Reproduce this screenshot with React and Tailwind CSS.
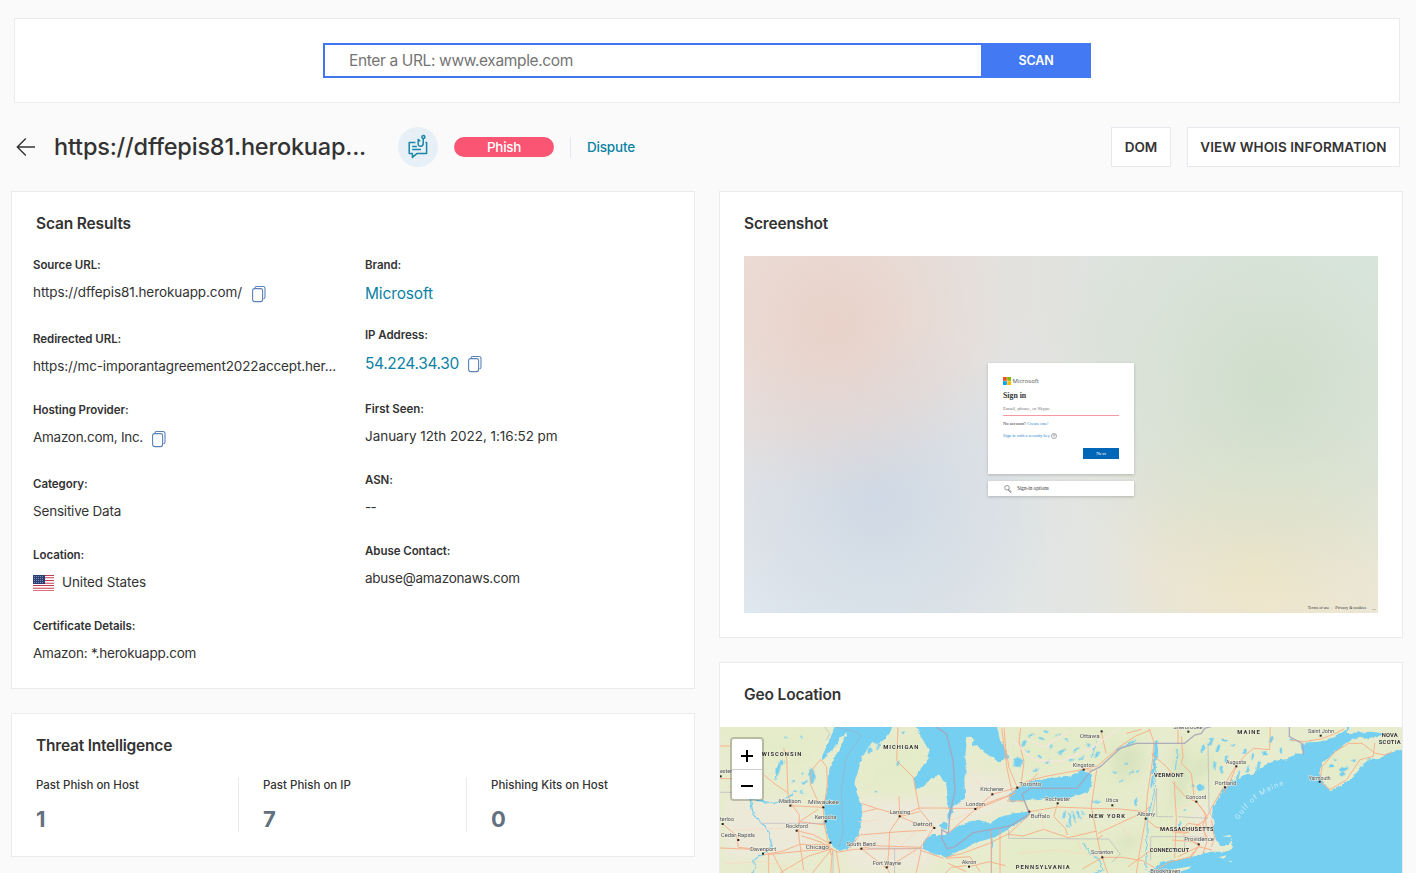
import React from "react";

function CopyIcon() {
  return (
    <svg width="16" height="18" viewBox="0 0 16 18" fill="none" stroke="#5b83b8" strokeWidth="1.1">
      <rect x="1.6" y="3.6" width="10" height="13" rx="2" />
      <path d="M4 3.2C4 2 4.6 1.5 5.6 1.5H12c1.2 0 2 .8 2 2V12c0 1-.6 1.8-1.6 1.8" />
    </svg>
  );
}

function Flag() {
  return (
    <svg width="21" height="16" viewBox="0 0 21 16" shapeRendering="crispEdges">
      <rect width="21" height="16" fill="#fff" />
      <path d="M0 .5h21M0 5.5h21M0 10.5h21" stroke="#c23b50" />
      <path d="M0 2.5h21M0 8h21M0 13h21M0 15.5h21" stroke="#d9707f" />
      <path d="M0 3.5h21M0 7h21M0 12h21" stroke="#f3ccd1" />
      <rect width="12" height="9" fill="#2b3e74" />
      <path d="M1 1.5h10M1 3.5h10M1 5.5h10M1 7.5h10" stroke="#8592b5" strokeDasharray="1 1" />
    </svg>
  );
}

function PhishIcon() {
  return (
    <svg width="22" height="26" viewBox="0 0 22 26" fill="none" stroke="#1b87a9" strokeWidth="1.5" strokeLinejoin="round">
      <path d="M8.4 8.6H2.2v11h3.2v3.8l4.4-3.8h9.8v-11h-1.2" />
      <path d="M5.2 12.4h4.6M5.2 15.6h8.8" />
      <path d="M16.2 4.6v5c0 3.6-5 3.6-5 .4V5.4l2 1.8" />
      <circle cx="16.4" cy="2.9" r="1.5" />
    </svg>
  );
}

function Field({ label, children, className }) {
  return (
    <div className={className}>
      <div className="h-4 text-[11.5px] leading-4 font-semibold tracking-[-0.06px]">{label}</div>
      <div className="mt-[7px] flex h-[25px] items-center text-[13.5px] whitespace-nowrap">{children}</div>
    </div>
  );
}

function Stat({ label, value, className }) {
  return (
    <div className={className}>
      <div className="h-4 text-[11.5px] leading-4 font-medium">{label}</div>
      <div className="mt-[10px] text-[22px] leading-[33px] font-bold text-[#637080]">{value}</div>
    </div>
  );
}

function CardTitle({ children, className }) {
  return <h2 className={`mt-5 text-[15.5px] leading-6 font-semibold ${className}`}>{children}</h2>;
}

function SitePreview() {
  return (
    <div className="flex h-[357px] w-[634px] flex-col items-center bg-[radial-gradient(circle_at_14%_19%,#e9d2c9_0%,#e9d2c900_28%),radial-gradient(circle_at_21%_68%,#cfd9e5_0%,#cfd9e500_32%),radial-gradient(circle_at_83%_36%,#d0decc_0%,#d0decc00_38%),radial-gradient(circle_at_81%_87%,#efe5c8_0%,#efe5c800_28%),radial-gradient(circle_at_0%_0%,#ecdfdb_0%,#ecdfdb00_50%),radial-gradient(circle_at_0%_100%,#dfe8f0_0%,#dfe8f000_60%),radial-gradient(circle_at_100%_0%,#dae7df_0%,#dae7df00_50%),radial-gradient(circle_at_100%_100%,#eae7d9_0%,#eae7d900_60%)] bg-[#e0e2df] pt-[107px] font-['Liberation_Serif',serif] text-[#333]">
      <div className="flex h-[111px] w-[146px] flex-col bg-white px-[15px] pt-[14px] text-[4.6px] leading-[6px] shadow-[0_1px_3px_rgba(0,0,0,0.2)]">
        <div className="flex h-2 items-center gap-[1.5px]">
          <svg width="8" height="8" viewBox="0 0 8 8">
            <path fill="#f25022" d="M0 0h3.8v3.8H0z" />
            <path fill="#7fba00" d="M4.2 0H8v3.8H4.2z" />
            <path fill="#00a4ef" d="M0 4.2h3.8V8H0z" />
            <path fill="#ffb900" d="M4.2 4.2H8V8H4.2z" />
          </svg>
          <span className="font-['Open_Sans',sans-serif] text-[6px] leading-[7px] text-[#555]">Microsoft</span>
        </div>
        <div className="mt-[6px] text-[7.8px] leading-[9px] font-bold">Sign in</div>
        <div className="mt-[6px] h-[9px] text-[5px] text-[#777]">Email, phone, or Skype</div>
        <div className="h-px w-full bg-[#f39aa2]" />
        <div className="mt-[5px]">No account? <span className="text-[#2a84c9]">Create one!</span></div>
        <div className="mt-[6px] flex h-[6px] items-center gap-px text-[4.4px] whitespace-nowrap text-[#2a84c9]">
          Sign in with a security key
          <svg width="6" height="6" viewBox="0 0 6 6" fill="none" stroke="#555" strokeWidth=".5"><circle cx="3" cy="3" r="2.5" /><path d="M2.2 2.4c0-1.2 1.7-1 1.6 0L3 3.3v.4" /></svg>
        </div>
        <div className="mt-[9px] flex h-[11px] w-9 items-center justify-center self-end bg-[#0067b8] text-[5px] text-white">Next</div>
      </div>
      <div className="mt-[7px] flex h-[15px] w-[146px] items-center gap-[5px] bg-white pl-[16px] text-[5.2px] shadow-[0_1px_3px_rgba(0,0,0,0.2)]">
        <svg width="8" height="8" viewBox="0 0 8 8" fill="none" stroke="#555" strokeWidth=".6"><circle cx="3" cy="2.8" r="2.3" /><path d="M4.6 4.4l2.6 2.2-.4 1-2.8-2.4" /></svg>
        Sign-in options
      </div>
      <div className="mt-auto mr-[2px] flex h-[9px] items-center gap-[6px] self-end text-[4.2px]">
        <span>Terms of use</span><span>Privacy &amp; cookies</span><span className="text-[5px] leading-[5px]">...</span>
      </div>
    </div>
  );
}

/* City labels: name, x, y, width, dot x, dot y */
const cities = [
  ["Madison", 183, 249, 66, 217, 257], ["Milwaukee", 270, 252, 93, 316, 262],
  ["Kenosha", 290, 296, 65, 323, 304], ["Rockford", 203, 325, 67, 236, 332],
  ["Cedar Rapids", 9, 352, 102, 61, 360], ["Davenport", 97, 394, 77, 135, 401],
  ["Chicago", 263, 388, 70, 337, 368], ["South Bend", 386, 379, 87, 430, 386],
  ["Fort Wayne", 464, 434, 85, 506, 442], ["Lansing", 515, 281, 62, 545, 289],
  ["Detroit", 585, 319, 58, 649, 324], ["terloo", 6, 304, 42, 14, 312], ["ester", 6, 160, 36, 8, 169],
  ["Ottawa", 1085, 53, 60, 1151, 34], ["Kingston", 1064, 140, 66, 1097, 149],
  ["Kitchener", 787, 214, 71, 823, 223], ["Toronto", 904, 197, 66, 898, 203],
  ["London", 744, 257, 57, 772, 267], ["Rochester", 982, 242, 74, 1019, 250],
  ["Buffalo", 938, 293, 58, 934, 275], ["Utica", 1163, 247, 38, 1183, 256],
  ["Albany", 1257, 288, 54, 1283, 296], ["Scranton", 1119, 403, 67, 1153, 412],
  ["Akron", 731, 432, 44, 753, 440], ["Brookhaven", 1297, 460, 90, 1340, 470],
  ["Sherbrooke", 1366, 28, 88, 1411, 35], ["Augusta", 1524, 133, 60, 1555, 139],
  ["Portland", 1491, 194, 64, 1521, 202], ["Concord", 1403, 237, 62, 1435, 245],
  ["Providence", 1399, 364, 89, 1442, 373], ["Saint John", 1770, 39, 78, 1808, 47],
  ["Yarmouth", 1772, 179, 66, 1805, 185],
];
/* Region labels: name, x, y, width */
const regions = [
  ["WISCONSIN", 131, 108, 119], ["MICHIGAN", 496, 86, 105], ["NEW YORK", 1113, 293, 108],
  ["PENNSYLVANIA", 893, 446, 162], ["VERMONT", 1308, 171, 89], ["MASSACHUSETTS", 1326, 333, 161],
  ["CONNECTICUT", 1295, 396, 118], ["MAINE", 1558, 42, 67], ["NOVA", 1991, 51, 48], ["SCOTIA", 1982, 71, 66],
];
/* Inland lakes: x, y, rx, ry, rotation */
const ponds = [
  [180, 150, 5, 20, 15], [192, 128, 6, 9, 40], [282, 168, 8, 24, 0], [252, 160, 5, 3, 0], [260, 186, 10, 4, -30],
  [232, 212, 6, 4, 0], [225, 186, 5, 4, 0], [220, 242, 9, 4, 0], [250, 216, 5, 3, 20], [250, 50, 4, 3, 0], [202, 52, 5, 2, 0],
  [455, 90, 5, 12, 20], [480, 80, 4, 10, 15], [540, 130, 4, 8, 20], [474, 214, 4, 3, 0], [556, 38, 5, 4, 0],
  [899, 127, 15, 14, 0], [918, 70, 6, 10, 30], [940, 45, 10, 3, -20], [970, 55, 12, 3, 10], [1000, 80, 9, 3, -30],
  [1030, 95, 11, 4, -30], [965, 110, 8, 3, 20], [990, 125, 10, 3, -40], [1045, 60, 8, 3, 30], [955, 150, 9, 3, -30],
  [1075, 90, 12, 3, -40], [1090, 115, 10, 3, -30], [1110, 75, 8, 3, 40], [930, 95, 6, 3, 0], [985, 35, 7, 3, 20],
  [1020, 45, 9, 2, -10], [1060, 120, 8, 3, -10], [1135, 105, 12, 4, -50], [1205, 85, 14, 3, -30], [1235, 70, 22, 4, -28],
  [1313, 95, 7, 28, 0], [1307, 140, 4, 22, 10], [1302, 185, 3, 20, 10], [1254, 245, 3, 14, 25], [1240, 158, 8, 3, -30],
  [1210, 182, 8, 3, -30], [1225, 130, 6, 3, 0], [1260, 155, 6, 3, -30], [1136, 245, 12, 4, 5], [1190, 155, 7, 3, 0],
  [1039, 282, 3, 12, 30], [1055, 298, 3, 22, -8], [1068, 290, 3, 20, -20], [1082, 285, 3, 14, -30], [1095, 278, 2, 10, -35], [1050, 320, 2, 6, 0],
  [1446, 203, 10, 9, 30], [1425, 198, 4, 6, 0], [1455, 85, 4, 14, 30], [1478, 65, 5, 14, 30], [1500, 85, 5, 12, 20],
  [1520, 60, 7, 4, 0], [1545, 75, 8, 3, -40], [1490, 135, 4, 12, 10], [1510, 150, 4, 12, -15], [1525, 115, 4, 10, 20],
  [1580, 95, 5, 10, 20], [1605, 110, 4, 12, 10], [1640, 100, 9, 5, 30], [1660, 60, 5, 10, 30], [1690, 90, 5, 8, 0],
  [1620, 140, 4, 14, 15], [1590, 150, 4, 12, 10], [1560, 165, 4, 12, 20], [1720, 60, 6, 4, 0], [1540, 185, 4, 9, 20],
  [1877, 147, 14, 6, -20], [1873, 162, 8, 7, 0], [1840, 138, 7, 4, 0], [1908, 122, 5, 4, 0], [1850, 120, 5, 3, 0],
  [1400, 270, 4, 3, 0], [1385, 312, 4, 9, 20], [1465, 325, 5, 3, 0], [1371, 390, 4, 6, 0], [825, 372, 3, 12, 0],
];

function GeoMap() {
  return (
    <svg className="block" width="682" height="146" viewBox="6 21 2046 438" fontFamily="Roboto, sans-serif">
      <defs>
        <filter id="soft" x="0" y="0" width="100%" height="100%" colorInterpolationFilters="sRGB"><feGaussianBlur stdDeviation="18" /></filter>
        <filter id="rough" x="0" y="0" width="100%" height="100%" colorInterpolationFilters="sRGB">
          <feTurbulence type="fractalNoise" baseFrequency=".06" numOctaves="2" seed="4" />
          <feDisplacementMap in="SourceGraphic" scale="12" xChannelSelector="R" yChannelSelector="G" />
        </filter>
      </defs>
      <rect x="0" y="0" width="2060" height="470" fill="#e8ecce" />
      <g filter="url(#soft)">
        <path fill="#e4ebc8" d="M20 20h280l-30 120-180-20zM430 120l180-80 20 70-60 120-140-20zM880 20h420l-60 190-110 40 10-120-260 10zM1240 250h130v200h-60zM860 350l260-20 160 60-20 80H860zM1380 60h170l-50 130-120 40zM1800 120l120-70 40 60-120 90z" />
        <path fill="#ece9d9" d="M20 230l200 20 90 60-20 90-270 20zM390 240l260-10 30 80-50 140H380zM690 240l60-90 130 30 10 70-200 80zM1440 230l60 60v110l-80-10z" />
        <path fill="#d9e3bf" d="M1180 90l90-20 10 80-80 30zM1360 90l50-10-10 160-40 40zM1190 360l60-20 20 30-60 20zM1420 130l60-30-10 60-50 30z" />
      </g>
      <g fill="#75cff0" filter="url(#rough)">
        <path d="M355 5L335 60 318 95 308 120 318 118 330 100 345 88 365 55 388 36 372 75 350 110 330 160 328 205 318 260 322 310 330 350 345 380 365 393 390 385 412 365 425 330 433 290 430 250 415 215 412 180 425 140 435 105 446 90 462 66 480 72 500 58 515 40 530 5z" />
        <path d="M585 5L615 60 632 90 632 115 605 150 588 180 592 205 612 205 640 175 665 165 685 190 690 245 692 305 708 260 741 235 741 215 739 180 746 140 742 110 745 75 741 50 766 55 765 75 781 80 796 95 821 112 841 125 871 115 866 95 846 60 833 5z" />
        <path d="M876 245L871 225 896 205 931 185 991 175 1051 170 1091 150 1121 160 1123 195 1111 215 1081 225 1031 240 981 235 931 240 906 245z" />
        <path d="M616 365L640 345 680 345 711 325 751 305 781 300 816 310 846 290 891 280 931 275 929 292 881 322 831 352 771 368 741 386 711 398 686 413 650 402 616 387z" />
        <path d="M662 314L678 305 692 310 690 328 670 328z" />
        <path d="M2070 480L2070 85 2012 100 1982 118 1952 115 1927 140 1907 170 1872 195 1837 215 1817 190 1803 160 1812 130 1852 95 1892 65 1922 50 1952 55 2002 42 1962 35 1882 40 1892 32 1907 5 1880 32 1852 50 1802 65 1762 68 1747 75 1757 102 1732 100 1707 118 1682 120 1652 130 1632 140 1602 165 1577 165 1552 180 1527 195 1502 230 1484 260 1482 295 1492 300 1484 320 1490 350 1507 378 1535 378 1540 353 1545 382 1522 395 1482 395 1462 400 1422 410 1382 420 1330 428 1290 455 1320 480z" />
      </g>
      <path fill="#e9edcd" d="M1330 459l40-12 50-8-8 8-50 14zM1502 412l24-6-8 10zM1530 423l14-1-6 4zM1512 350l24-6 4 8-6-2z" />
      <g fill="#75cff0" filter="url(#rough)">
        {ponds.map(([x, y, rx, ry, r], i) => <ellipse key={i} cx={x} cy={y} rx={rx} ry={ry} transform={`rotate(${r} ${x} ${y})`} />)}
      </g>
      <g fill="none" stroke="#75cff0" strokeWidth="4" filter="url(#rough)">
        <path d="M92 215l8 40 6 30 28 25 20 30 8 40-30 25-25 15 5 22-10 20M98 238l70 12 34-12 20-14M170 180l14-50" />
        <path d="M1095 370l20 30 30 20 10 30-30 12M1140 60l-20 50M1316 60l-8 160-20 80-5 150M1378 90l-6 60M1500 280l-8 10" strokeWidth="3" />
      </g>
      <g fill="none" stroke="#f8ae86" strokeWidth="2.8">
        <path d="M6 78h30M197 85l9 30 4 110 12 30 22 30-2 60 15 105M138 165l30 25 41 28M130 170L50 176H6M216 257l100 5M240 308l60-40M308 118l-25 30-6 45 20 45 19 24 2 50 12 50 10 45M308 118l18 22 2 50-8 60M245 305l75 10M236 332l50 12 48 26M250 347l60 20 35 22M14 312l42 35 5 35 75 8M6 384l130 5 20 14 120-12 70-3M135 405l60-12 50-20 90 2M152 402v58M343 390l20 6 45-8 200-2M430 385l40-8 140 5M343 392l-5 68M355 395l10 64M395 385l30-40 120-10 80-4M545 290l60-15M545 290l-30 45-2 50-5 60M430 250l48 16-45 10M478 266l70 20 55-22h85M604 268l45 55M545 290l50 20 52 12M540 22l-4 100 50 50 18 95M606 385l40-60M610 388l-15 70M606 390l70 25M337 392l-55 68M337 388l-65 20-85 50M165 403l30 56M430 386l75 58 90-55M506 442l10 20M545 289l-2-60" />
        <path d="M686 265h86l60-25 60-20M898 203l-30 40h50l16 30M690 340l80-70 110-45M772 267l51-44 75-20 30-20 60-15 110-20 40-10 70-60 45-30 45-18M898 203l-25-60-10-60-5-60M882 215l-15-70-16-120M930 190l30-30M908 205l10-80-15-60 5-40M934 275l85-14 100 4 90 2 70 8M1019 250l-12 40 35 35 6 20M1120 258l16-108M1125 150l-20 0M1120 258l15 80 10 50 8 25M1140 340l140-65 15-15M1283 296l30 25 60 12 40 5M1283 296l-20 110-8 55M1283 296l5-70 15-100 5-60-15-40M871 343l45 5 60-20 75 25 85-20M820 330v130M846 330v130M934 285l-60 55-60 30-80 30-50 12M686 415l70-5 30 45M753 440l60-15 50 12M690 430l55 25M1153 412l60 0 60 10 35 20M1153 412l-60 35M1153 412l20 60M1155 345l-14 10M1230 440l70-50M1295 460l60-34 60-15 30-35M1150 35l14 65M1225 40l45-12M680 462l20-20 45-5" />
        <path d="M1390 50l5 60-5 20 30 30 10 85M1362 185l40 45 33 16 25 30 6 50M1300 100l45 40 17 20M1370 185v30l5 80-5 120M1362 335l40 5 60-40 20-40 35-60 35-60 30-35 25-20 48 4 2-80M1435 245l30 40-10 30 10 50M1390 335l20-25 35 5 25 40-15 45M1380 410l62-30 40 10M1362 360l60 5 20 10M1396 345l50 30-30 40M1555 139l-20 50-18 30M1380 20v50M1480 380l10-25-10-55M1718 60l40 5 50-8 40-15 30-15M1812 140l40-45 40-25 40 0 40 30 30 5 20-10M1812 140l-6 45 30 24 50-30 40-60 40-10 4-40" />
      </g>
      <g fill="none" stroke="#fbd7bd" strokeWidth="2">
        <path d="M20 430l120-5 130 30M50 330l150-5M480 300l-60 5M520 350l80 60M700 300l80-30M770 180l50 40M960 270l20 60M1070 330l20 60M900 400l120-10 130 20M1200 300l40 60M30 200l70 20M600 330l-100 90M1420 250l-50 20" />
      </g>
      <g fill="none" stroke="#f6e5df" strokeWidth="4">
        <path d="M880 60l70 60 80 5 90-40 80-60M930 60l50 20 70-45" />
      </g>
      <g fill="none" stroke="#a7a5bb" strokeWidth="2.6" opacity=".9">
        <path strokeWidth="4" d="M655 21l30 20 20 80 6 90-15 70-5 60-20 -12v25l18 35M686 385l20-2 60-45 110-20 58-35-22-60 25-18h140l40-50 30-15 60-55 48-15h145l30-25 20-5 10-15 20-5M1714 20v30l38 20 5 35" />
        <path d="M355 21l40 10 35 15-45 65-15 100 5 130-12 40M130 310h195M345 392v68M530 385v74M450 385h170M872 330v25l300 2 35 45-25 25M820 330v130M1316 205l-15 90M1316 205v85h50M1298 350h100l60 2M1298 350v70M1470 70l3 200 10 25M1380 290l90 5M1400 350v40M6 217h95M320 21l15 20-10 20" opacity=".65" />
      </g>
      <g fontSize="18.5" fill="#4d4f55" stroke="#f3f2e4" strokeWidth="3" paintOrder="stroke">
        {cities.map(([n, x, y, w]) => <text key={n} x={x} y={y} textLength={w} lengthAdjust="spacingAndGlyphs">{n}</text>)}
      </g>
      <g fill="#222">
        {cities.map(([n, , , , dx, dy]) => <rect key={n} x={dx - 3} y={dy - 3} width="6" height="6" />)}
      </g>
      <g fontSize="17.5" fontWeight="700" fill="#333" stroke="#f3f2e4" strokeWidth="2" paintOrder="stroke">
        {regions.map(([n, x, y, w]) => <text key={n} x={x} y={y} textLength={w}>{n}</text>)}
      </g>
      <path id="gulf" d="M1562 300Q1612 215 1716 190" fill="none" />
      <text fontSize="22" fill="#c4ebfa" letterSpacing="3.6"><textPath href="#gulf">Gulf of Maine</textPath></text>
    </svg>
  );
}

export default function App() {
  return (
    <div className="h-[873px] w-[1416px] overflow-hidden bg-[#fafafa] pt-[18px] font-[Inter,sans-serif] text-[#333]">
      <div className="mr-4 ml-[14px] flex h-[85px] items-center justify-center border border-[#ebebed] bg-white">
        <div className="flex h-[35px] w-[768px]">
          <div className="flex flex-1 items-center border-2 border-r-0 border-[#4175f1] bg-white pl-6 text-[15.5px] tracking-[-0.36px] text-[#757575]">
            Enter a URL: www.example.com
          </div>
          <button className="w-[110px] bg-[#4479f4] pt-px text-[12.5px] font-semibold tracking-[-0.1px] text-white">SCAN</button>
        </div>
      </div>

      <div className="mt-6 flex h-10 items-center pr-4 pl-4">
        <svg width="20" height="20" viewBox="0 0 20 20" fill="none" stroke="#333" strokeWidth="1.4"><path d="M19 10H1.5M9.8 1.5L1.3 10l8.5 8.5" /></svg>
        <h1 className="ml-[18px] w-[344px] text-[23.5px] leading-8 font-medium tracking-[-0.2px] whitespace-nowrap">https://dffepis81.herokuap...</h1>
        <div className="flex size-10 items-center justify-center rounded-full bg-[#e7f0f6]"><PhishIcon /></div>
        <div className="ml-4 flex h-5 w-[100px] items-center justify-center rounded-full bg-[#fa5673] text-[13.5px] font-medium tracking-[-0.3px] text-white">Phish</div>
        <div className="ml-4 h-[21px] w-px bg-[#e4e7ef]" />
        <a className="ml-4 pt-px text-[13.5px] font-medium tracking-[-0.18px] text-[#0b82a5]">Dispute</a>
        <div className="ml-auto flex gap-4 text-[13.5px] font-semibold">
          <button className="h-10 w-[60px] border border-[#e7e9ee] bg-white pt-px">DOM</button>
          <button className="h-10 w-[213px] border border-[#e7e9ee] bg-white pt-px tracking-[0.08px] whitespace-nowrap">VIEW WHOIS INFORMATION</button>
        </div>
      </div>

      <div className="mt-6 flex items-start gap-6 pl-[11px]">
        <div className="flex w-[684px] flex-col gap-6">
          <section className="h-[498px] border border-[#ebebed] bg-white">
            <CardTitle className="ml-6 tracking-[-0.15px]">Scan Results</CardTitle>
            <div className="mt-[21px] ml-[21px] flex">
              <div className="w-[332px]">
                <Field label="Source URL:" className="h-[74px]"><span className="tracking-[-0.09px]">https://dffepis81.herokuapp.com/</span><span className="mt-0.5 ml-[9px]"><CopyIcon /></span></Field>
                <Field label="Redirected URL:" className="h-[71px]"><span className="tracking-[-0.13px]">https://mc-imporantagreement2022accept.her...</span></Field>
                <Field label="Hosting Provider:" className="h-[74px]"><span className="tracking-[-0.28px]">Amazon.com, Inc.</span><span className="mt-0.5 ml-2"><CopyIcon /></span></Field>
                <Field label="Category:" className="h-[71px]"><span className="tracking-[-0.2px]">Sensitive Data</span></Field>
                <Field label="Location:" className="h-[71px]"><Flag /><span className="ml-2 tracking-[-0.12px]">United States</span></Field>
                <Field label="Certificate Details:"><span className="tracking-[-0.23px]">Amazon: *.herokuapp.com</span></Field>
              </div>
              <div>
                <Field label="Brand:" className="h-[70px]"><a className="mt-0.5 text-[15.5px] tracking-[-0.14px] text-[#0b82a5]">Microsoft</a></Field>
                <Field label="IP Address:" className="h-[74px]"><a className="mt-0.5 text-[15.5px] tracking-[-0.34px] text-[#0b82a5]">54.224.34.30</a><span className="mt-0.5 ml-2"><CopyIcon /></span></Field>
                <Field label="First Seen:" className="h-[71px]"><span className="tracking-[-0.04px]">January 12th 2022, 1:16:52 pm</span></Field>
                <Field label="ASN:" className="h-[71px]"><span className="tracking-[-0.6px]">--</span></Field>
                <Field label="Abuse Contact:"><span className="tracking-[-0.24px]">abuse@amazonaws.com</span></Field>
              </div>
            </div>
          </section>
          <section className="h-[144px] border border-[#ebebed] bg-white">
            <CardTitle className="ml-6 tracking-[-0.21px]">Threat Intelligence</CardTitle>
            <div className="mt-[19px] ml-6 flex h-[55px]">
              <Stat label="Past Phish on Host" value="1" className="w-[203px] border-r border-[#e9ebef]" />
              <Stat label="Past Phish on IP" value="7" className="w-[228px] border-r border-[#e9ebef] pl-6" />
              <Stat label="Phishing Kits on Host" value="0" className="pl-6" />
            </div>
          </section>
        </div>
        <div className="flex w-[684px] flex-col gap-6">
          <section className="h-[447px] border border-[#ebebed] bg-white pl-6">
            <CardTitle className="mb-5 tracking-[-0.16px]">Screenshot</CardTitle>
            <SitePreview />
          </section>
          <section className="border border-[#ebebed] bg-white">
            <CardTitle className="mb-5 ml-6 tracking-[-0.15px]">Geo Location</CardTitle>
            <div className="relative">
              <GeoMap />
              <div className="absolute top-[10px] left-[10px] w-[34px] rounded border-2 border-black/20 bg-clip-padding text-black">
                <button className="flex h-[31px] w-full items-center justify-center rounded-t-[2px] border-b border-[#ccc] bg-white pt-[3px]"><svg width="14" height="14" stroke="#000" strokeWidth="2"><path d="M1 7h12M7 1v12" /></svg></button>
                <button className="flex h-[29px] w-full items-center justify-center rounded-b-[2px] bg-white pt-[3px]"><svg width="14" height="14" stroke="#000" strokeWidth="2"><path d="M1 7h12" /></svg></button>
              </div>
            </div>
          </section>
        </div>
      </div>
    </div>
  );
}
